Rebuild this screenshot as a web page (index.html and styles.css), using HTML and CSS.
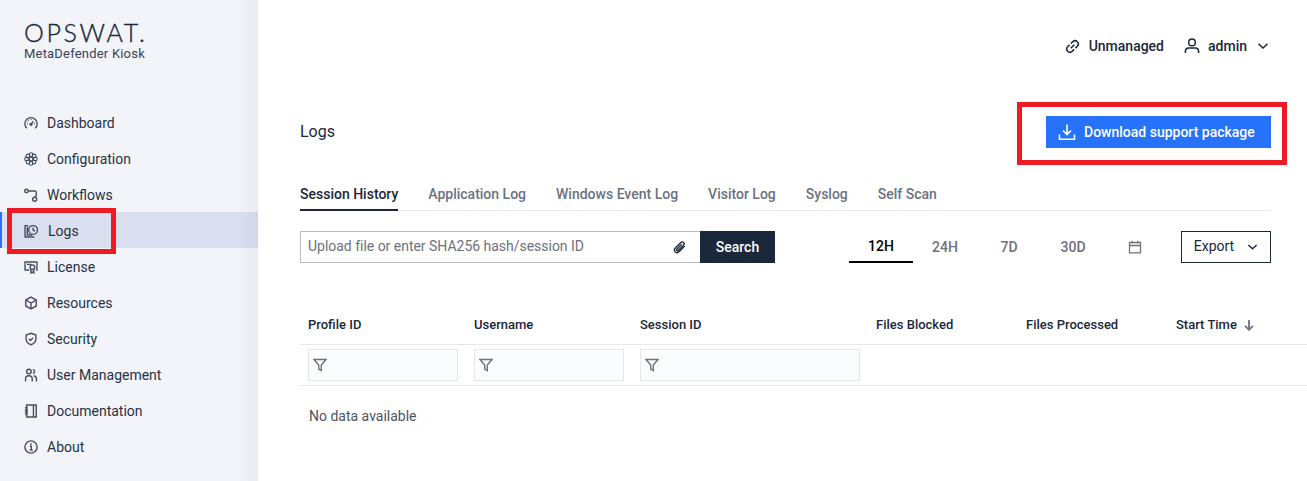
FILE: index.html
```html
<!DOCTYPE html>
<html lang="en">
<head>
<meta charset="utf-8">
<title>Logs - MetaDefender Kiosk</title>
<link rel="stylesheet" href="styles.css">
</head>
<body>
<div class="app">
  <aside class="sidebar">
    <div class="brand">
      <div class="brand-name">OPSWAT.</div>
      <div class="brand-sub">MetaDefender Kiosk</div>
    </div>
    <nav class="nav">
      <a class="nav-item"><svg class="nav-icon" viewBox="0 0 16 16"><path d="M3.200 14A7 7 0 1 1 12.800 14"/><path d="M8 9.500 10.600 5.800M3.600 8.500h1M11.400 8.500h1M8 3.600v1M4.800 5.200l.6.600"/><circle class="dot" cx="8" cy="9.500" r="1.800"/></svg>Dashboard</a>
      <a class="nav-item"><svg class="nav-icon icon-fine" viewBox="0 0 16 16"><circle cx="8" cy="8" r="2.100"/><circle cx="13" cy="8" r="2.100"/><circle cx="3" cy="8" r="2.100"/><circle cx="8" cy="13" r="2.100"/><circle cx="8" cy="3" r="2.100"/><circle cx="11.500" cy="11.500" r="2.100"/><circle cx="4.500" cy="11.500" r="2.100"/><circle cx="11.500" cy="4.500" r="2.100"/><circle cx="4.500" cy="4.500" r="2.100"/></svg>Configuration</a>
      <a class="nav-item"><svg class="nav-icon" viewBox="0 0 16 16"><circle cx="2.800" cy="3.400" r="2"/><circle cx="12.200" cy="12.800" r="2.300"/><path d="M4.800 3.400H12.200c1.300 0 1.800.5 1.800 1.800v3c0 1-.6 1.600-1.800 2.300"/></svg>Workflows</a>
      <a class="nav-item is-active"><svg class="nav-icon" viewBox="0 0 16 16"><path d="M5 1.800H1.200v13h10.600"/><path d="M3.800 3v9.500h5.600"/><circle cx="10.400" cy="6.800" r="5"/><path d="M10.400 4.200v2.800l2 1"/></svg><span class="nav-label-shift">Logs</span></a>
      <a class="nav-item"><svg class="nav-icon" viewBox="0 0 16 16"><path d="M6 11.500H1.200V2.200h13.600v9.300h-1"/><circle cx="9.600" cy="8.200" r="2.600"/><path d="M8 10.600v4.200l1.600-1 1.600 1v-4.200M3.400 5h5"/></svg>License</a>
      <a class="nav-item"><svg class="nav-icon" viewBox="0 0 16 16"><path d="M8 1.200 14 4.600v6.800L8 14.800 2 11.400V4.600Z"/><path d="M2 4.600 8 8l6-3.400M8 8v6.800"/></svg>Resources</a>
      <a class="nav-item"><svg class="nav-icon" viewBox="0 0 16 16"><path d="M8 1.400 13.600 3.400V8c0 3.200-2.400 5.400-5.600 6.600C4.800 13.400 2.400 11.200 2.400 8V3.400Z"/><path d="m5.600 8 1.700 1.700 3.100-3.100"/></svg>Security</a>
      <a class="nav-item"><svg class="nav-icon" viewBox="0 0 16 16"><circle cx="5.600" cy="4" r="2.600"/><path d="M10.200 1.500a2.600 2.600 0 0 1 0 5"/><path d="M1.800 15.400v-3.200c0-2 1.500-3.400 3.800-3.400s3.800 1.400 3.800 3.400v3.200"/><path d="M11.200 8.900c1.800.3 3 1.500 3 3.300v3.200"/></svg>User Management</a>
      <a class="nav-item"><svg class="nav-icon" viewBox="0 0 16 16"><path d="M3 1.200h11v13.600H3Z"/><path d="M10.800 1.200v13.600M1 4.400h3.400M1 6.800h3.400M1 9.200h3.400M1 11.600h3.400"/></svg>Documentation</a>
      <a class="nav-item"><svg class="nav-icon" viewBox="0 0 16 16"><circle cx="8" cy="8" r="7"/><path d="M6.600 7.200H8.300V11.600M6.400 11.600h3.800"/><circle class="dot" cx="8" cy="4.700" r="1.100"/></svg>About</a>
    </nav>
  </aside>

  <main class="main">
    <header class="topbar">
      <div class="top-item">
        <svg class="top-icon" viewBox="0 0 16 16"><g transform="rotate(-45 8 8)"><path d="M7 4.600H4.200a3.400 3.400 0 0 0 0 6.800H7"/><path d="M9 4.600h2.800a3.400 3.400 0 0 1 0 6.800H9"/><path d="M5.400 8h5.200"/></g></svg>
        <span>Unmanaged</span>
      </div>
      <div class="top-item top-user">
        <svg class="user-icon" viewBox="0 0 16 16"><circle cx="8" cy="4.400" r="3.300"/><path d="M1.400 15v-1.600c0-2 1.500-3.400 3.400-3.400h6.400c1.900 0 3.400 1.400 3.400 3.400V15"/></svg>
        <span>admin</span>
        <svg class="chev" viewBox="0 0 12 8"><path d="M1.500 1.700 6 6l4.500-4.300"/></svg>
      </div>
    </header>

    <div class="content">
      <div class="title-row">
        <h1 class="title">Logs</h1>
        <button class="download-btn">
          <svg class="dl-icon" viewBox="0 0 18 18"><path d="M9 1.500v9.500M5 7.500l4 4 4-4M1.500 11.500v4.800h15v-4.800"/></svg>
          Download support package
        </button>
      </div>

      <div class="tabs">
        <a class="tab is-current">Session History</a>
        <a class="tab">Application Log</a>
        <a class="tab">Windows Event Log</a>
        <a class="tab">Visitor Log</a>
        <a class="tab">Syslog</a>
        <a class="tab">Self Scan</a>
      </div>

      <div class="toolbar">
        <div class="search">
          <div class="search-field">
            <span class="placeholder">Upload file or enter SHA256 hash/session ID</span>
            <svg class="clip" viewBox="0 0 16 16"><path d="M13.500 6.500 7.800 12.300c-1.400 1.400-3.300 1.500-4.400.4s-1-3 .4-4.400l5.400-5.400c1-1 2.300-1 3.100-.2s.8 2.100-.2 3.100L6.700 11c-.5.5-1.200.6-1.600.2s-.3-1.100.2-1.600L10.400 4.500"/></svg>
          </div>
          <button class="search-btn">Search</button>
        </div>
        <div class="ranges">
          <a class="range is-current">12H</a>
          <a class="range">24H</a>
          <a class="range">7D</a>
          <a class="range">30D</a>
          <a class="range range-cal"><svg class="cal" viewBox="0 0 14 14"><path d="M1.500 2.500h11v10.300h-11ZM1.500 5.500h11M4.200 1v2.500M9.800 1v2.500"/></svg></a>
        </div>
        <button class="export">Export<svg class="chev" viewBox="0 0 12 8"><path d="M1.500 1.700 6 6l4.500-4.300"/></svg></button>
      </div>

      <div class="table">
        <div class="row row-head">
          <div class="cell">Profile ID</div>
          <div class="cell">Username</div>
          <div class="cell">Session ID</div>
          <div class="cell">Files Blocked</div>
          <div class="cell">Files Processed</div>
          <div class="cell">Start Time<svg class="sort" viewBox="0 0 12 12"><path d="M6 1v9.500M2 6.800 6 10.800l4-4"/></svg></div>
        </div>
        <div class="row row-filter">
          <div class="cell"><div class="filter"><svg class="funnel" viewBox="0 0 14 14"><path d="M1 1.500h12L8.300 7v5.500l-2.600-1.500V7Z"/></svg></div></div>
          <div class="cell"><div class="filter"><svg class="funnel" viewBox="0 0 14 14"><path d="M1 1.500h12L8.300 7v5.500l-2.600-1.500V7Z"/></svg></div></div>
          <div class="cell"><div class="filter filter-wide"><svg class="funnel" viewBox="0 0 14 14"><path d="M1 1.500h12L8.300 7v5.500l-2.600-1.500V7Z"/></svg></div></div>
        </div>
        <div class="empty">No data available</div>
      </div>
    </div>
  </main>

  <div class="mark mark-logs"></div>
  <div class="mark mark-download"></div>
</div>
</body>
</html>
```

FILE: styles.css
```css
* { box-sizing: border-box; }
html, body { margin: 0; height: 100%; }
body {
  font-family: Roboto, "Liberation Sans", sans-serif;
  font-size: 14px;
  color: #1b273a;
  background: #fff;
  overflow: hidden;
}
.app { position: relative; display: flex; width: 1307px; height: 481px; overflow: hidden; }

/* Sidebar */
.sidebar {
  flex: 0 0 258px;
  background: linear-gradient(to right, #f2f4fa 0, #f2f4fa 235px, #e9ebf1 258px);
}
.brand { height: 104px; padding: 21px 0 0 24px; }
.brand-name {
  font-family: Lato, "Liberation Sans", sans-serif;
  font-size: 25px;
  font-weight: 300;
  line-height: 22px;
  letter-spacing: 2.6px;
  color: #1b273a;
  -webkit-text-stroke: .35px #1b273a;
}
.brand-sub {
  margin-top: 3px;
  font-size: 13px;
  line-height: 16px;
  letter-spacing: .2px;
  color: #3a4355;
}
.nav { display: flex; flex-direction: column; }
.nav-item {
  display: flex;
  align-items: center;
  height: 36px;
  padding: 2px 0 0 24px;
  gap: 9px;
  color: #273246;
  font-size: 14px;
}
.nav-item.is-active {
  background: linear-gradient(to right, #d9dfef 0, #d9dfef 235px, #d1d6e6 258px);
  border-left: 2px solid #2672fb;
  padding-left: 22px;
}
.nav-label-shift { margin-left: 1px; }
.nav-icon {
  width: 14px;
  height: 14px;
  flex: none;
  fill: none;
  stroke: #454f60;
  stroke-width: 1.6;
}
.nav-icon .dot { fill: #454f60; stroke: none; }
.nav-icon.icon-fine { stroke-width: 1.3; }

/* Main */
.main { flex: 1; min-width: 0; display: flex; flex-direction: column; }
.topbar {
  display: flex;
  justify-content: flex-end;
  align-items: center;
  height: 92px;
  padding-right: 38px;
  gap: 20px;
  font-weight: 500;
}
.top-item { display: flex; align-items: center; gap: 9px; }
.top-user { gap: 8px; }
.top-icon { width: 15px; height: 15px; fill: none; stroke: #1b273a; stroke-width: 1.7; }
.user-icon { width: 16px; height: 16px; fill: none; stroke: #1b273a; stroke-width: 1.5; }
.chev { width: 12px; height: 8px; fill: none; stroke: #1b273a; stroke-width: 1.5; margin-left: 2px; }

.content { padding-left: 42px; }
.title-row {
  display: flex;
  justify-content: space-between;
  align-items: center;
  height: 32px;
  margin-top: 24px;
  padding-right: 36px;
}
.title { margin: -2px 0 0; font-size: 16px; font-weight: 400; color: #1b273a; }
.download-btn {
  display: flex;
  align-items: center;
  gap: 8px;
  width: 225px;
  height: 32px;
  padding: 0 0 0 12px;
  border: 0;
  background: #2672fb;
  color: #fff;
  font: 500 14px Roboto, sans-serif;
}
.dl-icon { width: 18px; height: 18px; fill: none; stroke: #fff; stroke-width: 1.6; }

.tabs {
  display: flex;
  gap: 30px;
  height: 31px;
  margin: 32px 36px 0 0;
  border-bottom: 1px solid #e6e7eb;
}
.tab { height: 31px; line-height: 28px; font-weight: 500; color: #6c7280; white-space: nowrap; }
.tab.is-current { color: #1b273a; border-bottom: 2px solid #1b273a; }

.toolbar {
  display: flex;
  align-items: flex-start;
  height: 32px;
  margin: 20px 36px 0 0;
}
.search { display: flex; width: 475px; height: 32px; }
.search-field {
  display: flex;
  align-items: center;
  justify-content: space-between;
  width: 400px;
  padding: 0 12px 0 7px;
  border: 1px solid #b9bbc0;
  border-right: 0;
}
.placeholder { color: #6c7280; letter-spacing: -.02px; position: relative; top: -1px; }
.clip { width: 15px; height: 15px; fill: none; stroke: #1b273a; stroke-width: 1.4; margin-right: 1px; }
.search-btn {
  width: 75px;
  border: 0;
  padding: 0;
  background: #1b273a;
  color: #fff;
  font: 500 14px Roboto, sans-serif;
}
.ranges { display: flex; margin-left: 74px; }
.range {
  width: 64px;
  height: 32px;
  line-height: 32px;
  text-align: center;
  font-weight: 500;
  color: #6c7280;
}
.range.is-current { color: #000; border-bottom: 2px solid #000; line-height: 30px; }
.range-cal { display: flex; align-items: center; justify-content: center; margin-left: -2px; }
.cal { width: 14px; height: 14px; fill: none; stroke: #6c7280; stroke-width: 1.3; }
.export {
  display: flex;
  align-items: center;
  justify-content: center;
  gap: 11px;
  width: 90px;
  height: 32px;
  margin-left: auto;
  padding: 0 0 2px;
  border: 1px solid #1b273a;
  background: #fff;
  color: #1b273a;
  font: 400 14px Roboto, sans-serif;
}
.export .chev { margin-left: 2px; margin-top: 2px; width: 11px; }

.table { margin-top: 45px; }
.row { display: grid; grid-template-columns: 166px 166px 236px 150px 150px 1fr; }
.row-head {
  height: 37px;
  padding-bottom: 4px;
  align-items: center;
  border-bottom: 1px solid #e6e7eb;
  font-size: 13px;
  font-weight: 500;
}
.row-head .cell { display: flex; align-items: center; gap: 6px; padding-left: 8px; }
.sort { width: 12px; height: 12px; fill: none; stroke: #6c7280; stroke-width: 1.8; margin-top: 2px; }
.row-filter { height: 41px; align-items: center; border-bottom: 1px solid #e6e7eb; }
.row-filter .cell { padding-left: 8px; }
.filter {
  display: flex;
  align-items: center;
  width: 150px;
  height: 32px;
  padding-left: 4px;
  background: #fbfcfe;
  border: 1px solid #e6e7eb;
}
.filter-wide { width: 220px; }
.funnel { width: 14px; height: 14px; fill: none; stroke: #6c7280; stroke-width: 1.4; }
.empty { padding: 22px 0 0 9px; line-height: 17px; color: #4c5362; }

/* Red annotation boxes drawn on top of the screenshot */
.mark { position: absolute; border: 5px solid #ed1c24; pointer-events: none; }
.mark-logs { left: 7px; top: 208px; width: 109px; height: 46px; }
.mark-download { left: 1017px; top: 102px; width: 270px; height: 63px; }
```
